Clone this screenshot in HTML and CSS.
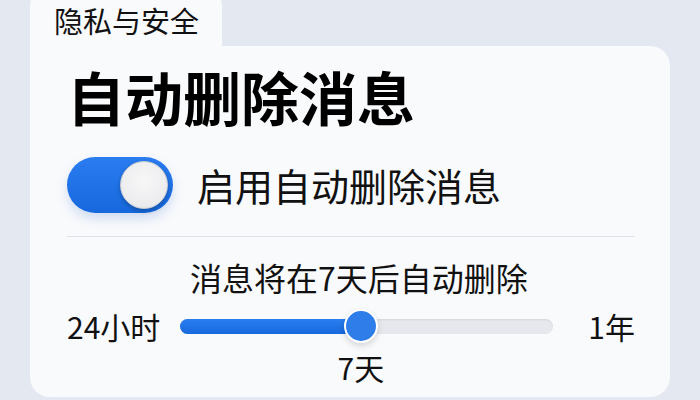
FILE: index.html
```html
<!DOCTYPE html>
<html lang="zh-CN">

<head>
    <meta charset="UTF-8">
    <meta name="viewport" content="width=device-width, initial-scale=1.0">
    <title>自动删除消息</title>
    <link rel="stylesheet" href="styles.css">
</head>

<body>
    <div class="panel">
        <div class="tab">隐私与安全</div>

        <div class="card">
            <h1>自动删除消息</h1>

            <!-- Switch row -->
            <div class="switch-row">
                <div class="switch on">
                    <span class="knob"></span>
                </div>
                <span class="switch-label">启用自动删除消息</span>
            </div>

            <hr class="divider">

            <!-- Duration slider -->
            <div class="duration">
                <div class="status">消息将在7天后自动删除</div>
                <span class="end-label">24小时</span>
                <div class="track">
                    <div class="fill" style="width: 48.4%;"></div>
                    <span class="thumb" style="left: 48.4%;"></span>
                </div>
                <span class="end-label right">1年</span>
                <div class="value"><span style="margin-left: 48.4%;">7天</span></div>
            </div>
        </div>
    </div>
</body>

</html>
```

FILE: styles.css
```css
body {
    margin: 0;
    padding: 0 30px;
    height: 400px;
    overflow: hidden;
    background-color: #e4e8f0;
    font-family: "Noto Sans CJK SC", "Noto Sans", sans-serif;
    color: #111;
}

.panel {
    display: flex;
    flex-direction: column;
    align-items: flex-start;
}

.tab {
    margin-top: -12px;
    padding: 12px 22px 0 24px;
    height: 46px;
    line-height: 40px;
    font-size: 29px;
    background-color: #f9fafc;
    border-top-left-radius: 18px;
    border-top-right-radius: 18px;
    width: 146px;
}

.card {
    align-self: stretch;
    height: 351px;
    box-sizing: border-box;
    padding: 22px 35px 0 37px;
    background-color: #f9fafc;
    border-radius: 0 20px 20px 20px;
}

h1 {
    margin: 0;
    font-size: 58px;
    line-height: 57px;
    font-weight: 700;
    color: #000;
}

.switch-row {
    display: flex;
    align-items: center;
    gap: 24px;
    margin-top: 32px;
}

.switch {
    position: relative;
    width: 106px;
    height: 56px;
    border-radius: 28px;
    background: linear-gradient(180deg, #2a7cf0 0%, #1668dc 100%);
    box-shadow: 0 6px 12px rgba(30, 90, 200, 0.18);
}

.switch .knob {
    position: absolute;
    top: 4px;
    right: 5px;
    width: 46px;
    height: 46px;
    border-radius: 50%;
    background: radial-gradient(circle at 50% 40%, #f7f7f8 0%, #ececee 70%, #dcdcdf 100%);
    border: 1px solid #c9cbd0;
    box-shadow: 0 2px 4px rgba(0, 0, 0, 0.25);
}

.switch-label {
    font-size: 38px;
    line-height: 40px;
}

.divider {
    margin: 23px 0 0;
    border: none;
    border-top: 1px solid #dde2ea;
}

.duration {
    display: grid;
    grid-template-columns: auto 1fr auto;
    column-gap: 20px;
    align-items: center;
    margin-top: 24px;
}

.status {
    grid-column: 2;
    text-align: center;
    font-size: 32px;
    line-height: 32px;
    margin: 0 -30px 17px;
    padding-right: 16px;
}

.end-label {
    grid-column: 1;
    font-size: 30px;
    line-height: 32px;
}

.end-label.right {
    grid-column: 3;
    padding-left: 15px;
}

.track {
    grid-column: 2;
    position: relative;
    height: 15px;
    border-radius: 8px;
    background-color: #e6e8ed;
    box-shadow: inset 0 1px 2px rgba(0, 0, 0, 0.08);
}

.fill {
    height: 100%;
    border-radius: 8px 0 0 8px;
    background: linear-gradient(180deg, #2a7ef0 0%, #1768dc 100%);
}

.thumb {
    position: absolute;
    top: 50%;
    width: 30px;
    height: 30px;
    margin: -17px 0 0 -17px;
    border-radius: 50%;
    background-color: #2f7de8;
    border: 2px solid #fff;
    box-shadow: 0 3px 6px rgba(0, 0, 0, 0.15);
}

.value {
    grid-column: 2;
    margin-top: 9px;
    font-size: 30px;
    line-height: 32px;
}

.value span {
    display: inline-block;
    transform: translateX(-50%);
}
```
